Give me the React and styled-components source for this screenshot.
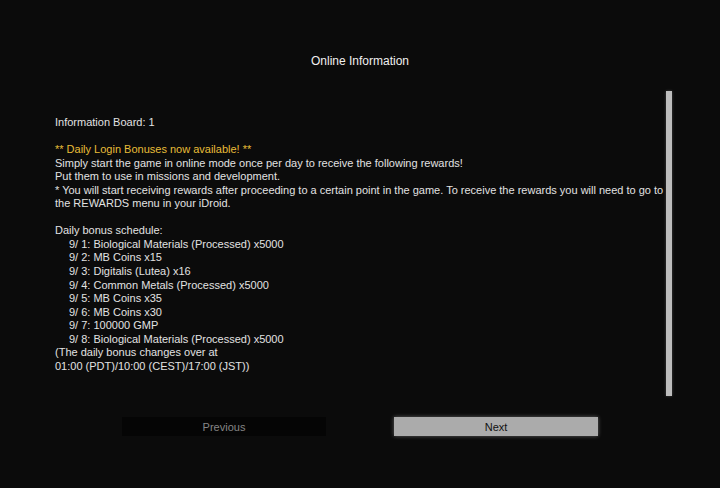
import styled, { createGlobalStyle } from "styled-components"

const GlobalStyle = createGlobalStyle`
    html, body {
        margin: 0;
        padding: 0;
        background: #0b0b0b;
    }
    body {
        font-family: "Liberation Sans", Arial, sans-serif;
    }
`

const schedule = [
    '9/ 1: Biological Materials (Processed) x5000',
    '9/ 2: MB Coins x15',
    '9/ 3: Digitalis (Lutea) x16',
    '9/ 4: Common Metals (Processed) x5000',
    '9/ 5: MB Coins x35',
    '9/ 6: MB Coins x30',
    '9/ 7: 100000 GMP',
    '9/ 8: Biological Materials (Processed) x5000',
]

export default function App(){
    return <Page>
        <GlobalStyle />
        <Title>Online Information</Title>

        <Panel>
            <Board>
                <Line>Information Board: 1</Line>
                <Blank />
                <Line highlight>** Daily Login Bonuses now available! **</Line>
                <Line>Simply start the game in online mode once per day to receive the following rewards!</Line>
                <Line>Put them to use in missions and development.</Line>
                <Line>* You will start receiving rewards after proceeding to a certain point in the game. To receive the rewards you will need to go to</Line>
                <Line>the REWARDS menu in your iDroid.</Line>
                <Blank />
                <Line>Daily bonus schedule:</Line>
                {schedule.map(item => <Line key={item} indent>{item}</Line>)}
                <Line>(The daily bonus changes over at</Line>
                <Line>01:00 (PDT)/10:00 (CEST)/17:00 (JST))</Line>
            </Board>
            <Scrollbar />
        </Panel>

        <Buttons>
            <NavButton>Previous</NavButton>
            <NavButton active>Next</NavButton>
        </Buttons>
    </Page>
}

const Page = styled.main`
    width: 720px;
    height: 488px;
    display: flex;
    flex-direction: column;
    background: #0b0b0b;
    color: #e8e8e8;
    overflow: hidden;
`

const Title = styled.h1`
    margin: 54px 0 0;
    font-size: 12px;
    line-height: 14px;
    font-weight: normal;
    text-align: center;
    color: #f0f0f0;
`

const Panel = styled.section`
    margin-top: 23px;
    height: 305px;
    display: flex;
    justify-content: space-between;
    padding: 0 48px 0 55px;
`

const Board = styled.div`
    padding-top: 25px;
    font-size: 11px;
    line-height: 13.55px;
`

const Line = styled.div`
    white-space: nowrap;
    color: ${(props) => props.highlight ? '#e8bd38' : '#e2e2e2'};
    padding-left: ${(props) => props.indent ? '14px' : '0'};
`

const Blank = styled.div`
    height: 13.55px;
`

const Scrollbar = styled.div`
    width: 6px;
    height: 100%;
    background: #bdbdbd;
    box-shadow: 0 0 3px rgba(255, 255, 255, 0.25);
`

const Buttons = styled.nav`
    margin-top: 21px;
    display: flex;
    justify-content: center;
    gap: 68px;
`

const NavButton = styled.button`
    width: 204px;
    height: 19px;
    padding: 0;
    border: none;
    outline: 0;
    font-family: "Liberation Sans", Arial, sans-serif;
    font-size: 11px;
    background: ${(props) => props.active ? '#ababab' : '#050505'};
    color: ${(props) => props.active ? '#111111' : '#858585'};
    box-shadow: ${(props) => props.active ? '0 0 4px rgba(255, 255, 255, 0.35)' : 'none'};
`
